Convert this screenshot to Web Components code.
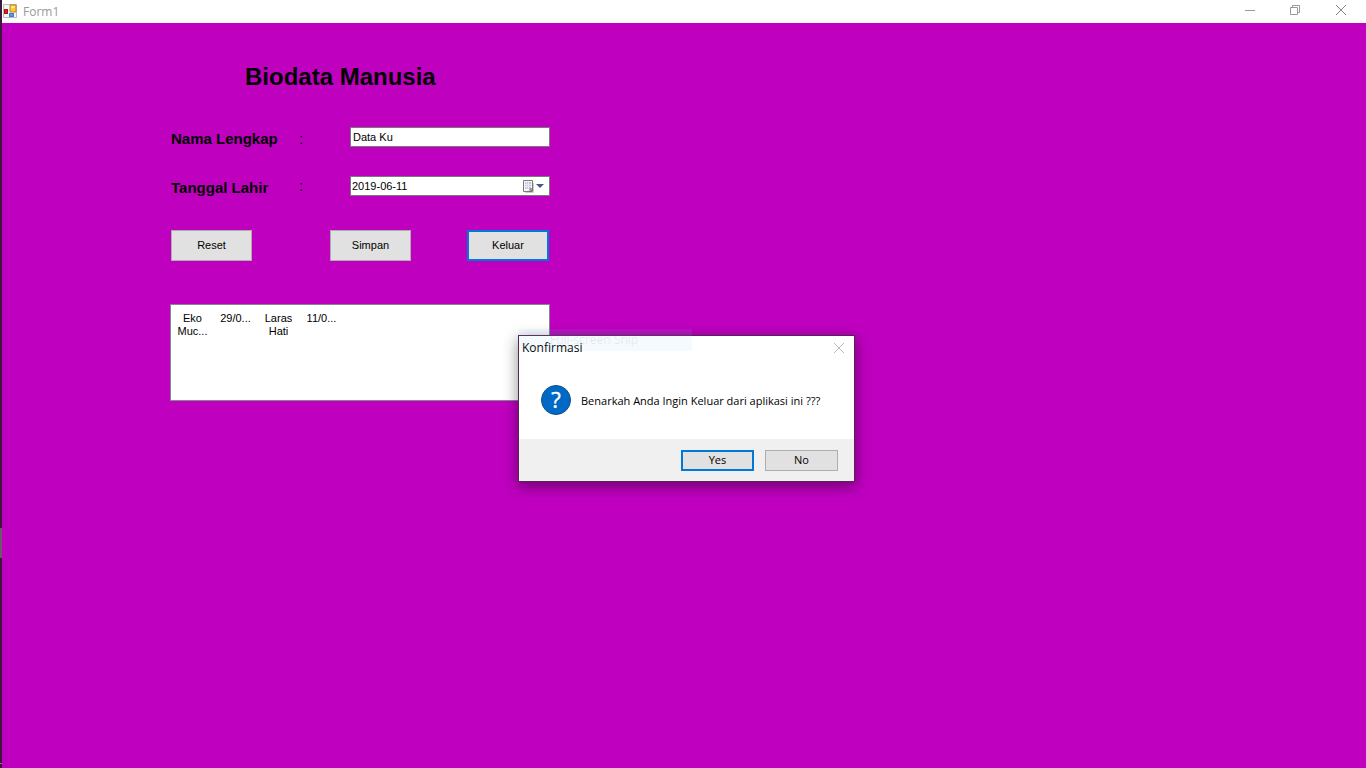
<!DOCTYPE html>
<html lang="id">
<head>
<meta charset="utf-8">
<title>Form1</title>
<style>
html,body{margin:0;height:100%}
body{font:11px/13px "Liberation Sans",Arial,sans-serif;color:#000;overflow:hidden}
</style>
</head>
<body>
<form-window></form-window>

<template id="t-window">
<style>
:host{display:flex;min-height:100vh;position:relative;overflow:hidden}
.edge{width:2px;flex:none;display:flex;flex-direction:column;background:#3d1640}
.edge i{height:30px;margin-top:528px;background:#6c586c}
.edge b{height:1px;margin:auto 0 4px;background:#8a788a}
.frame{flex:1;display:flex;flex-direction:column;background:#bf00bf}
main{padding:38px 0 0 168px}
h1{margin:0 0 34px 75px;font-size:24px;line-height:32px}
.fields{display:grid;gap:29px}
.buttons{display:flex;width:380px;height:31px;margin:34px 0 43px;padding-left:1px;box-sizing:border-box}
.buttons push-button{width:81px}
.buttons .second{margin-left:78px}
.buttons .third{width:82px;margin-left:56px}
message-box{position:absolute;left:518px;top:335px}
.ghost{position:absolute;left:519px;top:329px;width:173px;height:22px;box-sizing:border-box;padding-left:31px;font:12px/22px "Open Sans",sans-serif;color:rgba(110,90,100,.12);background:rgba(145,201,247,.09)}
</style>
<div class="edge"><i></i><b></b></div>
<div class="frame">
<title-bar>Form1</title-bar>
<main>
<h1>Biodata Manusia</h1>
<div class="fields">
<form-field label="Nama Lengkap" value="Data Ku"></form-field>
<form-field label="Tanggal Lahir" value="2019-06-11" date></form-field>
</div>
<div class="buttons"><push-button>Reset</push-button><push-button class="second">Simpan</push-button><push-button class="third" primary>Keluar</push-button></div>
<data-list></data-list>
</main>
</div>
<message-box heading="Konfirmasi">Benarkah Anda Ingin Keluar dari aplikasi ini ???</message-box>
<div class="ghost">Full-screen Snip</div>
</template>

<template id="t-title">
<style>
:host{display:flex;align-items:center;height:23px;background:#fff;font:12px/22px "Open Sans",sans-serif;color:#999}
.logo{margin:0 6px 2px 1px}
.name{flex:1}
button{width:46px;height:20px;padding:0;border:0;background:none;display:grid;place-items:center}
button:first-of-type{width:45px}
svg{display:block}
nav{display:flex;align-self:flex-start;margin-right:2px}
</style>
<svg class="logo" width="14" height="14" viewBox="0 0 14 14"><path d="M.5 .5h13v13H.5z" fill="#f4f4f4" stroke="#bbb"/><path d="M7 1h6v7H7z" fill="#ffc83d" stroke="#b98a1c"/><path d="M8 2h4v2H8z" fill="#ffe48a"/><path d="M1 5h4v5H1z" fill="#d52b1e"/><path d="M1.500 5.500h3v4h-3z" fill="none" stroke="#9c150e"/><path d="M6 9h5v4H6z" fill="#5b95ee"/><path d="M6.500 9.500h4v3h-4z" fill="none" stroke="#3f7ad6"/></svg>
<span class="name"><slot></slot></span>
<nav>
<button aria-label="Minimize"><svg width="10" height="10"><path d="M0 5.500h10" stroke="#999"/></svg></button>
<button aria-label="Restore"><svg width="10" height="10" fill="none" stroke="#999"><path d="M.5 2.500h7v7h-7zM2.500 2V.5h7v7H8"/></svg></button>
<button aria-label="Close"><svg width="10" height="10" stroke="#888"><path d="M0 0l10 10M10 0L0 10"/></svg></button>
</nav>
</template>

<template id="t-field">
<style>
:host{display:grid;grid-template:20px / 128px 51px 200px;align-items:center;padding-left:1px}
label,.colon{font-size:15px;line-height:16px;padding-top:4px}
label{font-weight:bold}
.box{display:flex;align-items:center;height:20px;box-sizing:border-box;border:1px solid #7a7a7a;background:#fff;padding-right:5px}
input{flex:1;min-width:0;height:18px;box-sizing:border-box;border:0;padding:0 0 0 2px;background:none;font:inherit;color:#000;outline:0}
:host([date]) input{padding-left:1px}
:host([date]) .colon{padding:0}
button{display:none;border:0;padding:0;background:none}
:host([date]) button{display:block}
svg{display:block}
</style>
<label for="entry"></label><span class="colon">:</span>
<div class="box"><input id="entry" type="text"><button aria-label="Buka kalender"><svg width="22" height="13" viewBox="0 0 22 13"><path d="M3 12.500h8.500V3" fill="none" stroke="#d0cccc"/><path d="M1.500 .5h9v11h-9z" fill="#f3f6fa" stroke="#857879"/><path d="M3 2h6v7H3z" fill="#b9c9dc"/><path d="M3 4.500h6M3 6.500h6M4.500 2v7M6.500 2v7" stroke="#e3eaf2"/><path d="M8 12V9h3z" fill="#fff" stroke="#716566"/><path d="M14 4h8l-4 4z" fill="#42598b"/></svg></button></div>
</template>

<template id="t-button">
<style>
:host{display:block}
button{width:100%;height:100%;margin:0;padding:0;border:1px solid #adadad;background:#e1e1e1;font:inherit;color:#000;text-align:center}
:host([primary]) button{border:2px solid #0078d7}
</style>
<button><slot></slot></button>
</template>

<template id="t-list">
<style>
:host{display:block;width:380px;height:97px;box-sizing:border-box;border:1px solid #828790;background:#fff;padding-top:7px}
ul{list-style:none;margin:0;padding:0;display:grid;grid-template-columns:repeat(4,43px);text-align:center}
</style>
<ul><li>Eko<br>Muc...</li><li>29/0...</li><li>Laras<br>Hati</li><li>11/0...</li></ul>
</template>

<template id="t-message">
<style>
:host{display:flex;flex-direction:column;width:337px;height:147px;box-sizing:border-box;border:1px solid #552455;background:#fff;box-shadow:0 4px 14px rgba(0,0,0,.45);font:11px/16px "Open Sans",sans-serif}
header{display:flex;justify-content:space-between;align-items:center;height:24px;padding:0 10px 0 3px;font-size:12px}
header button{border:0;padding:0;background:none}
svg{display:block}
.body{flex:1;display:flex;align-items:center;gap:9px;padding:1px 0 0 21px}
.message{padding-top:2px}
footer{display:flex;justify-content:flex-end;align-items:center;gap:11px;height:42px;padding-right:16px;background:#f0f0f0}
push-button{width:73px;height:21px}
.mark{font:22px "Open Sans",sans-serif;stroke:#fff;stroke-width:.4}
</style>
<header><span class="heading"></span><button aria-label="Close"><svg width="10" height="10" stroke="#bbb"><path d="M0 0l10 10M10 0L0 10"/></svg></button></header>
<div class="body"><svg width="32" height="32" viewBox="0 0 32 32"><circle cx="16" cy="16" r="14.500" fill="#0069c5" stroke="#114d83"/><text class="mark" x="16" y="24" text-anchor="middle" fill="#fff">?</text></svg><span class="message"><slot></slot></span></div>
<footer><push-button primary>Yes</push-button><push-button>No</push-button></footer>
</template>

<script>
class BaseElement extends HTMLElement {
  constructor() {
    super();
    this.attachShadow({mode: 'open'}).append(document.getElementById(this.constructor.template).content.cloneNode(true));
  }
}
class PushButton extends BaseElement { static template = 't-button'; }
class TitleBar extends BaseElement { static template = 't-title'; }
class DataList extends BaseElement { static template = 't-list'; }
class FormField extends BaseElement {
  static template = 't-field';
  connectedCallback() {
    this.shadowRoot.querySelector('label').textContent = this.getAttribute('label');
    this.shadowRoot.querySelector('input').value = this.getAttribute('value');
  }
}
class MessageBox extends BaseElement {
  static template = 't-message';
  connectedCallback() {
    this.shadowRoot.querySelector('.heading').textContent = this.getAttribute('heading');
    this.setAttribute('role', 'dialog');
    this.setAttribute('aria-label', this.getAttribute('heading'));
  }
}
class FormWindow extends BaseElement { static template = 't-window'; }
customElements.define('push-button', PushButton);
customElements.define('title-bar', TitleBar);
customElements.define('data-list', DataList);
customElements.define('form-field', FormField);
customElements.define('message-box', MessageBox);
customElements.define('form-window', FormWindow);
</script>
</body>
</html>
